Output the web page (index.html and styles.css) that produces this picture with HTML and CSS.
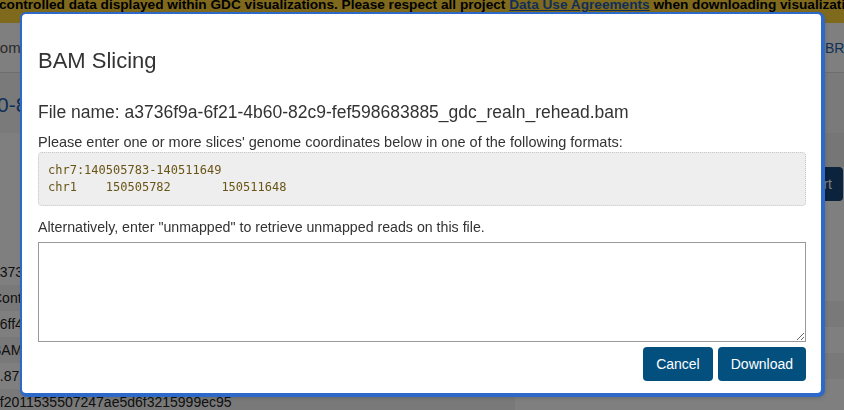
FILE: index.html
```html
<!DOCTYPE html>
<html lang="en">
<head>
<meta charset="utf-8">
<title>BAM Slicing</title>
<link rel="stylesheet" href="styles.css">
</head>
<body>
<div class="page">
  <div class="banner">
    <p class="banner-text">controlled data displayed within GDC visualizations. Please respect all project <a href="#">Data Use Agreements</a> when downloading visualizations.</p>
  </div>
  <div class="nav">
    <span class="crumb">Home</span>
    <span class="nav-right">BRCA</span>
  </div>
  <div class="heading">
    <h1 class="heading-title">0-82c9-fef598683885</h1>
  </div>
  <div class="content">
    <div class="left-col">
      <div class="table-head"></div>
      <div class="row">a3736f9a-6f21-4b60-82c9-fef598683885</div>
      <div class="row alt">Controlled</div>
      <div class="row">e6ff4d2b-91b0</div>
      <div class="row alt">BAM</div>
      <div class="row">8.87 GB</div>
      <div class="row alt">ef2011535507247ae5d6f3215999ec95</div>
    </div>
    <div class="right-col">
      <div class="right-band"></div>
      <div class="actions-bar">
        <button class="page-btn">Add to Cart</button>
      </div>
      <div class="row"></div>
      <div class="row alt"></div>
      <div class="row"></div>
      <div class="row alt"></div>
    </div>
  </div>
</div>

<div class="overlay"></div>

<div class="modal" role="dialog">
  <h2 class="modal-title">BAM Slicing</h2>
  <div class="file-name">File name: a3736f9a-6f21-4b60-82c9-fef598683885_gdc_realn_rehead.bam</div>
  <p class="hint">Please enter one or more slices' genome coordinates below in one of the following formats:</p>
  <pre class="code">chr7:140505783-140511649
chr1	150505782	150511648</pre>
  <p class="hint alt-hint">Alternatively, enter "unmapped" to retrieve unmapped reads on this file.</p>
  <textarea class="coords"></textarea>
  <div class="modal-actions">
    <button class="btn">Cancel</button>
    <button class="btn">Download</button>
  </div>
</div>
</body>
</html>
```

FILE: styles.css
```css
* { box-sizing: border-box; }

html, body {
  margin: 0;
  padding: 0;
  height: 410px;
  overflow: hidden;
}

body {
  font-family: "Liberation Sans", Arial, sans-serif;
  color: #333;
  background: #fff;
}

/* ---------- background page ---------- */
.page {
  display: flex;
  flex-direction: column;
  height: 410px;
}

.banner {
  height: 23px;
  background: #ffd23a;
  overflow: hidden;
  flex: none;
}

.banner-text {
  margin: -3px 0 0 -1px;
  font-size: 13.65px;
  line-height: 16px;
  font-weight: bold;
  color: #000;
  white-space: nowrap;
}

.banner-text a {
  color: #1f5fae;
}

.nav {
  height: 50px;
  flex: none;
  background: #fff;
  border-bottom: 1px solid #ddd;
  display: flex;
  align-items: center;
  justify-content: space-between;
  overflow: hidden;
}

.crumb {
  margin-left: -11px;
  font-size: 15px;
  color: #555;
}

.nav-right {
  font-size: 14px;
  color: #1f5fae;
  width: 19px;
  overflow: hidden;
  white-space: nowrap;
}

.heading {
  height: 60px;
  flex: none;
  display: flex;
  align-items: center;
  padding-top: 3px;
  background: #f5f5f5;
  overflow: hidden;
}

.heading-title {
  margin: 0 0 0 -3px;
  font-size: 21px;
  font-weight: normal;
  color: #1f5fae;
  white-space: nowrap;
}

.content {
  flex: 1;
  display: flex;
  gap: 6px;
  background: #fff;
  overflow: hidden;
}

.left-col {
  width: 515px;
  flex: none;
  display: flex;
  flex-direction: column;
  overflow: hidden;
}

.table-head {
  height: 126px;
  flex: none;
  background: #fff;
}

.row {
  height: 26px;
  flex: none;
  line-height: 26px;
  font-size: 14px;
  color: #222;
  white-space: nowrap;
  margin-left: -8px;
  background: #fff;
}

.row.alt {
  background: #f3f3f3;
}

.right-col {
  flex: 1;
  display: flex;
  flex-direction: column;
  overflow: hidden;
}

.right-band {
  height: 34px;
  flex: none;
  background: #ececec;
}

.actions-bar {
  height: 108px;
  flex: none;
  display: flex;
  justify-content: flex-end;
  align-items: flex-start;
  padding-right: 1px;
}

.page-btn {
  height: 34px;
  padding: 0 11px;
  border: none;
  border-radius: 4px;
  background: #16467a;
  color: #fff;
  font-family: "Liberation Sans", Arial, sans-serif;
  font-size: 14px;
}

.right-col .row {
  margin-left: 0;
}

/* ---------- overlay + modal ---------- */
.overlay {
  position: fixed;
  inset: 0;
  background: rgba(0, 0, 0, 0.5);
}

.modal {
  position: fixed;
  top: 14px;
  left: 22px;
  width: 799px;
  height: 379px;
  background: #fff;
  border-radius: 4px;
  box-shadow: 0 0 0 2px #2d69c9, 1px 1px 0 3px #2d69c9, 2px 3px 6px rgba(0, 0, 0, 0.3);
  padding: 0 15px 0 16px;
  display: flex;
  flex-direction: column;
}

.modal-title {
  margin: 34px 0 0;
  font-size: 22px;
  line-height: 26px;
  font-weight: normal;
  color: #333;
}

.file-name {
  margin-top: 27px;
  font-size: 17.5px;
  line-height: 22px;
  color: #333;
  white-space: nowrap;
}

.hint {
  margin: 10px 0 0;
  font-size: 14.5px;
  line-height: 18px;
  color: #333;
}

.code {
  margin: 1px 0 0;
  height: 54px;
  padding: 9px 9px;
  background: #eeeeee;
  border: 1px dotted #c6c6c6;
  border-radius: 4px;
  font-family: "DejaVu Sans Mono", "Liberation Mono", monospace;
  font-size: 12px;
  line-height: 17px;
  color: #6a5516;
  tab-size: 8;
  white-space: pre;
}

.alt-hint {
  margin-top: 12px;
  font-size: 14.2px;
}

.coords {
  display: block;
  margin-top: 6px;
  width: 100%;
  height: 100px;
  border: 1px solid #999;
  border-radius: 0;
  background: #fff;
  padding: 4px;
  font-family: "Liberation Sans", Arial, sans-serif;
  font-size: 14px;
}

.modal-actions {
  margin-top: 5px;
  display: flex;
  justify-content: flex-end;
  gap: 5px;
}

.btn {
  height: 34px;
  padding: 0 13px;
  border: none;
  border-radius: 4px;
  background: #03507f;
  color: #fff;
  font-family: "Liberation Sans", Arial, sans-serif;
  font-size: 14px;
}
```
